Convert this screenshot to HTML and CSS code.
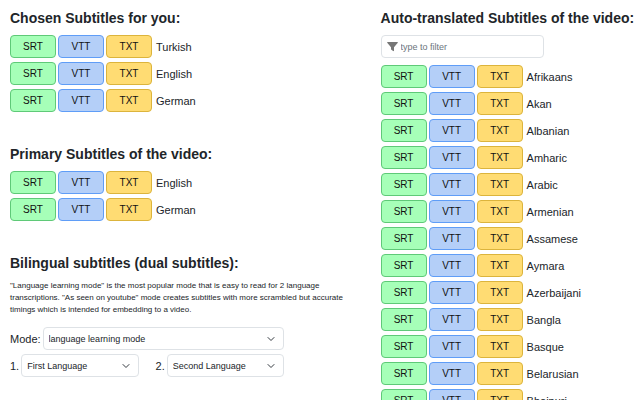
FILE: index.html
```html
<!DOCTYPE html>
<html lang="en">
<head>
  <meta charset="UTF-8">
  <meta name="viewport" content="width=device-width, initial-scale=1">
  <title>Download Subtitles</title>
  <link rel="stylesheet" href="styles.css">
</head>
<body>
  <main class="page">
    <div class="column">
      <section class="block">
        <h2>Chosen Subtitles for you:</h2>
        <ul class="subtitles" data-languages="Turkish,English,German"></ul>
      </section>

      <section class="block">
        <h2>Primary Subtitles of the video:</h2>
        <ul class="subtitles" data-languages="English,German"></ul>
      </section>

      <section class="block">
        <h2>Bilingual subtitles (dual subtitles):</h2>
        <p class="hint">"Language learning mode" is the most popular mode that is easy to read for 2 language transcriptions. "As seen on youtube" mode creates subtitles with more scrambled but accurate timings which is intended for embedding to a video.</p>
        <form class="bilingual">
          <div class="field">
            <label for="mode">Mode:</label>
            <select id="mode">
              <option>language learning mode</option>
              <option>as seen on youtube</option>
            </select>
          </div>
          <div class="field-row">
            <div class="field">
              <label for="first">1.</label>
              <select id="first">
                <option>First Language</option>
              </select>
            </div>
            <div class="field">
              <label for="second">2.</label>
              <select id="second">
                <option>Second Language</option>
              </select>
            </div>
          </div>
        </form>
      </section>
    </div>

    <div class="column">
      <section class="block">
        <h2>Auto-translated Subtitles of the video:</h2>
        <label class="filter">
          <svg class="filter-icon" viewBox="0 0 11 11" aria-hidden="true">
            <path d="M.8 1h9.400c.6 0 .8.600.4 1L7 6.200V9.500c0 .6-.4.800-.9.500L4.400 8.800C4.100 8.600 4 8.400 4 8V6.200L.4 2C0 1.600.2 1 .8 1z"/>
          </svg>
          <input type="text" id="filter" placeholder="type to filter" aria-label="type to filter">
        </label>
        <ul class="subtitles" id="translated" data-languages="Afrikaans,Akan,Albanian,Amharic,Arabic,Armenian,Assamese,Aymara,Azerbaijani,Bangla,Basque,Belarusian,Bhojpuri"></ul>
      </section>
    </div>
  </main>

  <script>
    // Fill every list with its download rows
    document.querySelectorAll('.subtitles').forEach((list) => {
      list.innerHTML = list.dataset.languages.split(',').map((name) => `
        <li>
          <button type="button" class="btn srt">SRT</button>
          <button type="button" class="btn vtt">VTT</button>
          <button type="button" class="btn txt">TXT</button>
          <span class="language">${name}</span>
        </li>`).join('');
    });

    document.getElementById('filter').addEventListener('input', (e) => {
      const term = e.target.value.trim().toLowerCase();
      document.querySelectorAll('#translated li').forEach((row) => {
        const name = row.querySelector('.language').textContent.toLowerCase();
        row.hidden = !name.includes(term);
      });
    });
  </script>
</body>
</html>
```

FILE: styles.css
```css
* {
  box-sizing: border-box;
}

body {
  margin: 0;
  font-family: "Liberation Sans", Arial, sans-serif;
  font-size: 11px;
  line-height: 16px;
  color: #212529;
  background: #fff;
}

.page {
  display: grid;
  grid-template-columns: 10fr 7fr;
  padding: 10px 0 0 10px;
}

.block {
  margin-bottom: 34px;
}

h2 {
  margin: 0 0 9px;
  font-size: 14px;
  line-height: 16px;
  white-space: nowrap;
}

.subtitles {
  display: flex;
  flex-direction: column;
  gap: 4px;
  margin: 0;
  padding: 0;
  list-style: none;
}

.subtitles li {
  display: flex;
  align-items: center;
  gap: 2px;
}

.subtitles li[hidden] {
  display: none;
}

.btn {
  width: 46px;
  height: 23px;
  padding: 0;
  border: 1px solid;
  border-radius: 4px;
  font-family: inherit;
  font-size: 10px;
  color: #111;
  cursor: pointer;
}

.srt {
  background: #a6ffb8;
  border-color: #5fc978;
}

.vtt {
  background: #b4cff8;
  border-color: #5f9df7;
}

.txt {
  background: #ffdc73;
  border-color: #dcb43c;
}

.language {
  margin-left: 2px;
}

.hint {
  margin: 0 0 11px;
  padding-right: 16px;
  font-size: 8px;
  line-height: 12px;
}

.bilingual {
  display: flex;
  flex-direction: column;
  gap: 4px;
  width: 74%;
}

.field {
  display: flex;
  flex: 1;
  align-items: center;
  gap: 2px;
}

.field-row {
  display: flex;
  gap: 17px;
}

select {
  flex: 1;
  min-width: 0;
  height: 23px;
  padding: 0 20px 0 5px;
  border: 1px solid #dee2e6;
  border-radius: 4px;
  appearance: none;
  font-family: inherit;
  font-size: 9px;
  color: #212529;
  background: #fff url("data:image/svg+xml,%3Csvg xmlns='http://www.w3.org/2000/svg' viewBox='0 0 16 16'%3E%3Cpath fill='none' stroke='%23343a40' stroke-linecap='round' stroke-linejoin='round' stroke-width='2' d='m2 5 6 6 6-6'/%3E%3C/svg%3E") no-repeat right 8px center / 8px 8px;
}

.filter {
  display: flex;
  align-items: center;
  gap: 3px;
  width: 63%;
  height: 23px;
  margin-bottom: 7px;
  padding: 0 5px;
  border: 1px solid #dee2e6;
  border-radius: 4px;
}

.filter-icon {
  width: 11px;
  height: 11px;
  fill: #777;
}

.filter input {
  flex: 1;
  min-width: 0;
  padding: 0;
  border: 0;
  outline: 0;
  font-family: inherit;
  font-size: 9px;
  color: #212529;
  background: none;
}

.filter input::placeholder {
  color: #6c757d;
}
```
